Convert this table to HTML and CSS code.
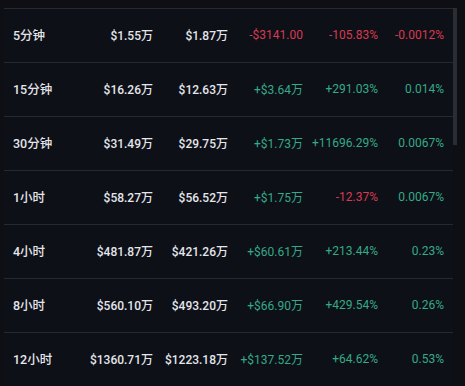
FILE: index.html
```html
<!DOCTYPE html>
<html lang="zh">
<head>
<meta charset="utf-8">
<link rel="stylesheet" href="styles.css">
</head>
<body>
<div class="panel">
  <div class="table">
    <div class="row">
      <div class="c label">5分钟</div><div class="c v">$1.55万</div><div class="c v">$1.87万</div>
      <div class="c down">-$3141.00</div><div class="c down">-105.83%</div><div class="c down">-0.0012%</div>
    </div>
    <div class="row">
      <div class="c label">15分钟</div><div class="c v">$16.26万</div><div class="c v">$12.63万</div>
      <div class="c up">+$3.64万</div><div class="c up">+291.03%</div><div class="c up">0.014%</div>
    </div>
    <div class="row">
      <div class="c label">30分钟</div><div class="c v">$31.49万</div><div class="c v">$29.75万</div>
      <div class="c up">+$1.73万</div><div class="c up">+11696.29%</div><div class="c up">0.0067%</div>
    </div>
    <div class="row">
      <div class="c label">1小时</div><div class="c v">$58.27万</div><div class="c v">$56.52万</div>
      <div class="c up">+$1.75万</div><div class="c down">-12.37%</div><div class="c up">0.0067%</div>
    </div>
    <div class="row">
      <div class="c label">4小时</div><div class="c v">$481.87万</div><div class="c v">$421.26万</div>
      <div class="c up">+$60.61万</div><div class="c up">+213.44%</div><div class="c up">0.23%</div>
    </div>
    <div class="row">
      <div class="c label">8小时</div><div class="c v">$560.10万</div><div class="c v">$493.20万</div>
      <div class="c up">+$66.90万</div><div class="c up">+429.54%</div><div class="c up">0.26%</div>
    </div>
    <div class="row">
      <div class="c label">12小时</div><div class="c v">$1360.71万</div><div class="c v">$1223.18万</div>
      <div class="c up">+$137.52万</div><div class="c up">+64.62%</div><div class="c up">0.53%</div>
    </div>
  </div>
  <div class="scroll"><div class="thumb"></div></div>
</div>
</body>
</html>
```
FILE: styles.css
```css
html, body {
  margin: 0;
  padding: 0;
  background: #0d0f15;
  height: 100%;
  overflow: hidden;
}
body {
  font-family: Roboto, "Noto Sans CJK SC", sans-serif;
  font-size: 12px;
}
.panel {
  display: flex;
  padding-top: 8px;
}
.table {
  margin-left: 4px;
  width: 449px;
  background: #0e1017;
}
.row {
  display: grid;
  grid-template-columns: 91px 58px 75px 75px 75px 66px;
  height: 51px;
  padding-bottom: 2px;
  border-top: 1px solid #262932;
  align-items: center;
}
.c {
  display: flex;
  justify-content: flex-end;
  white-space: nowrap;
}
.label {
  justify-content: flex-start;
  padding-left: 9px;
  color: #e4e6eb;
  font-weight: 500;
  font-size: 12.5px;
}
.v {
  color: #e4e6eb;
  font-weight: 500;
}
.up {
  color: #34aa88;
}
.down {
  color: #d83a52;
}
.scroll {
  width: 4px;
}
.thumb {
  height: 137px;
  background: #2a2d34;
}
```
